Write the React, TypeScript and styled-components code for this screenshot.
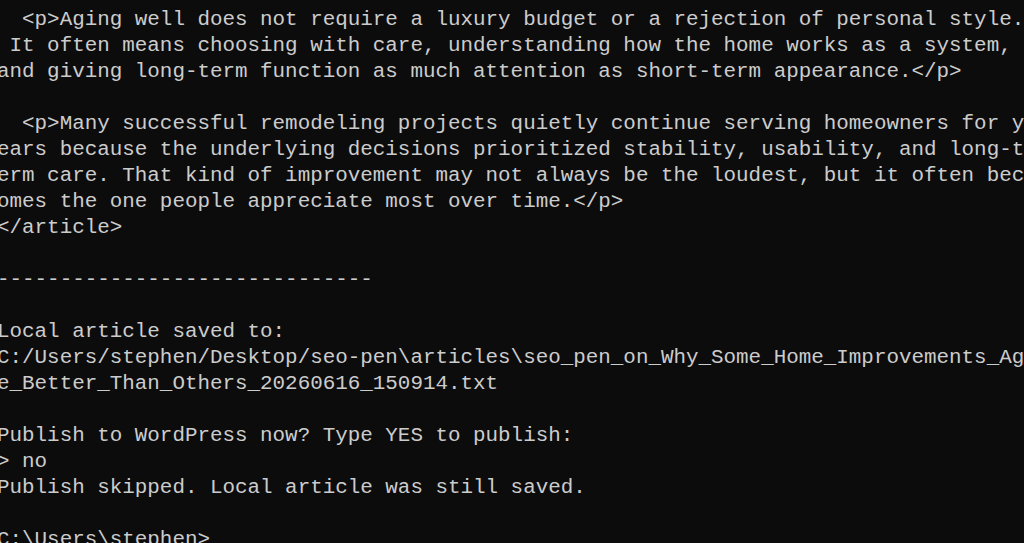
import React from "react";
import styled, { createGlobalStyle } from "styled-components";

const Global = createGlobalStyle`
  html, body {
    margin: 0;
    padding: 0;
    background: #0c0c0c;
    overflow: hidden;
  }
`;

const Screen = styled.main`
  width: 1024px;
  height: 543px;
  background: #0c0c0c;
  overflow: hidden;
`;

const Console = styled.pre`
  margin: 0 0 0 -3px;
  padding: 6.8px 0 0 0;
  font-family: "Liberation Mono", "DejaVu Sans Mono", monospace;
  font-size: 20.88px;
  line-height: 26px;
  color: #cccccc;
  white-space: pre;
`;

const Line = styled.div`
  height: 26px;
  white-space: pre;
`;

const lines = [
  "  <p>Aging well does not require a luxury budget or a rejection of personal style.",
  " It often means choosing with care, understanding how the home works as a system,",
  "and giving long-term function as much attention as short-term appearance.</p>",
  "",
  "  <p>Many successful remodeling projects quietly continue serving homeowners for y",
  "ears because the underlying decisions prioritized stability, usability, and long-t",
  "erm care. That kind of improvement may not always be the loudest, but it often bec",
  "omes the one people appreciate most over time.</p>",
  "</article>",
  "",
  "------------------------------",
  "",
  "Local article saved to:",
  "C:/Users/stephen/Desktop/seo-pen\\articles\\seo_pen_on_Why_Some_Home_Improvements_Ag",
  "e_Better_Than_Others_20260616_150914.txt",
  "",
  "Publish to WordPress now? Type YES to publish:",
  "> no",
  "Publish skipped. Local article was still saved.",
  "",
  "C:\\Users\\stephen>",
];

export default function App() {
  return (
    <Screen>
      <Global />
      <Console>
        {lines.map((l, i) => (
          <Line key={i}>{l}</Line>
        ))}
      </Console>
    </Screen>
  );
}
